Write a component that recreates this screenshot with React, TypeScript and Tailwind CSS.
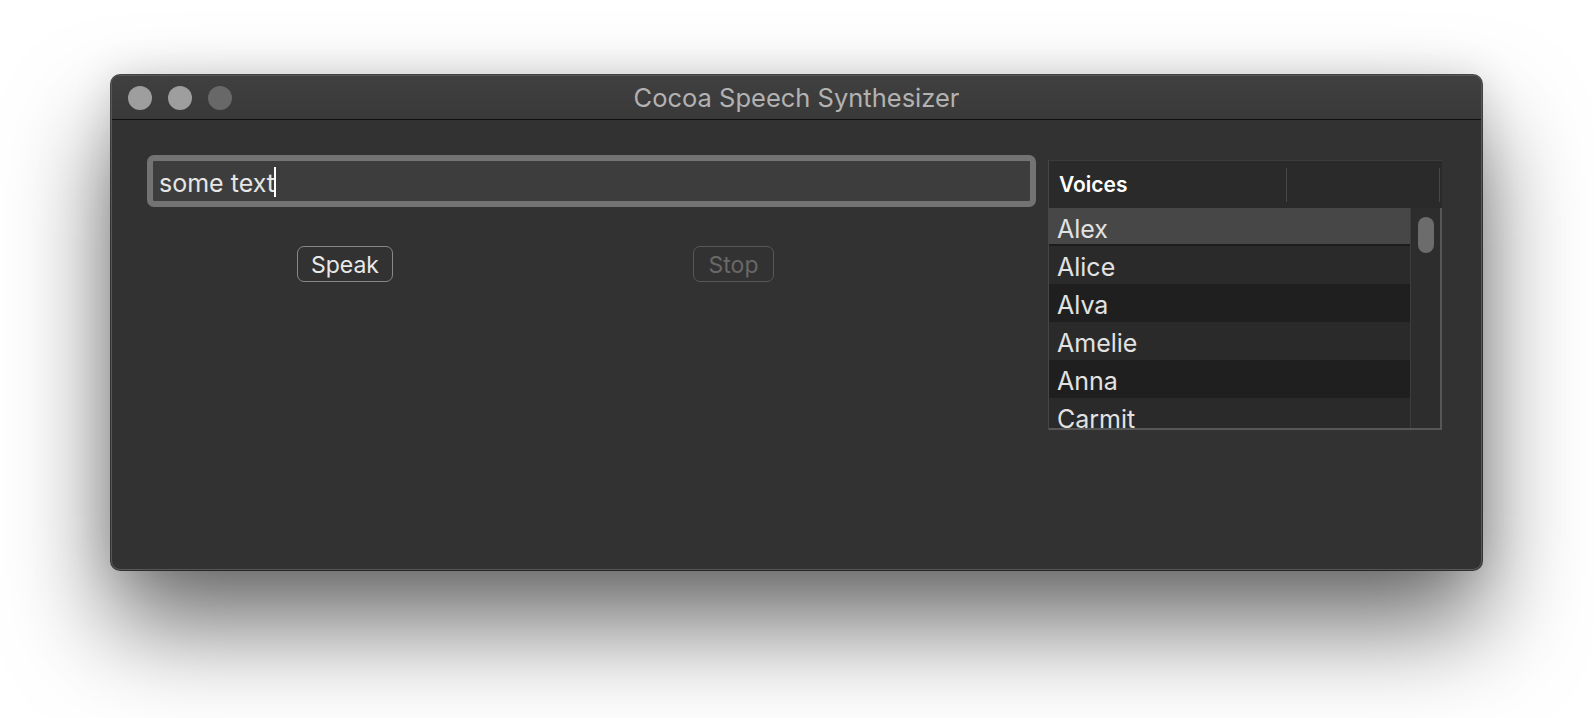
import React, { useState } from "react";

const voices = ["Alex", "Alice", "Alva", "Amelie", "Anna", "Carmit"];

const font = { fontFamily: "Inter, 'Noto Sans', 'Liberation Sans', sans-serif" };

const TrafficLights: React.FC = () => (
  <div className="flex items-center gap-[16px] pl-[16px]">
    <span className="w-[24px] h-[24px] rounded-full bg-[#9e9e9e]" />
    <span className="w-[24px] h-[24px] rounded-full bg-[#9e9e9e]" />
    <span className="w-[24px] h-[24px] rounded-full bg-[#686868]" />
  </div>
);

const VoicesTable: React.FC<{ selected: number; onSelect: (i: number) => void }> = ({ selected, onSelect }) => (
  <div className="mt-[5px] w-[394px] h-[270px] flex flex-col border-l border-[#464646]">
    {/* header */}
    <div className="h-[48px] shrink-0 flex items-center bg-[#2a2a2a] border-t border-[#3c3c3c]">
      <div className="w-[238px] h-[34px] flex items-center pl-[10px] pt-[1px] border-r border-[#474747] text-[21px] font-semibold text-white">
        Voices
      </div>
      <div className="flex-1 h-[34px] border-r border-[#474747]" />
      <div className="w-[2px]" />
    </div>

    {/* rows + scroller */}
    <div className="flex-1 flex min-h-0 border-r-2 border-b-2 border-[#575757]">
      <div className="flex-1 overflow-hidden">
        {voices.map((v, i) => {
          const isSel = i === selected;
          const stripe = i % 2 === 0 ? "bg-[#1f1f1f]" : "bg-[#2a2a2a]";
          return (
            <div
              key={v}
              onClick={() => onSelect(i)}
              className={`h-[38px] flex items-center pl-[8px] text-[25px] text-[#e2e2e2] cursor-default ${
                isSel ? "pt-[7px] bg-[#474747] border-b-2 border-[#1d1d1d]" : `pt-[5px] ${stripe}`
              }`}
            >
              {v}
            </div>
          );
        })}
      </div>
      <div className="w-[30px] shrink-0 bg-[#2d2d2d] border-l border-[#3c3c3c] pt-[9px] pl-[7px]">
        <div className="w-[16px] h-[36px] rounded-full bg-[#6c6c6c]" />
      </div>
    </div>
  </div>
);

const App: React.FC = () => {
  const [text] = useState("some text");
  const [selected, setSelected] = useState(0);

  return (
    <div className="min-h-screen bg-white pt-[75px] pl-[111px]" style={font}>
      <div className="w-[1371px] h-[495px] rounded-[9px] bg-[#323232] border border-[#575757] ring-1 ring-black/70 overflow-hidden flex flex-col shadow-[0_55px_100px_rgba(0,0,0,0.58),0_0_40px_rgba(0,0,0,0.12)]">
        {/* title bar */}
        <div className="h-[44px] shrink-0 grid grid-cols-[1fr_auto_1fr] items-center bg-gradient-to-b from-[#404040] to-[#393939] border-b border-[#101010]">
          <TrafficLights />
          <div className="text-[25.5px] text-[#b2b2b2] pt-[2px]">Cocoa Speech Synthesizer</div>
          <div />
        </div>

        {/* content */}
        <div className="flex-1 flex pt-[35px] pl-[35px] gap-[12px]">
          <div className="w-[889px] flex flex-col">
            <div className="h-[52px] rounded-[7px] border-[6px] border-[#737373] bg-[#3d3d3d] flex items-center pl-[6px]">
              <span className="text-[25px] text-[#e6e6e6] mt-[5px]">{text}</span>
              <span className="inline-block w-[2px] h-[30px] bg-white ml-[-1px] mt-[2px]" />
            </div>

            <div className="flex items-start mt-[39px] ml-[150px] gap-[300px]">
              <button className="w-[96px] h-[36px] rounded-[7px] border-[1.5px] border-[#888888] text-[23px] text-[#e8e8e8] flex items-center justify-center pt-[2px]">
                Speak
              </button>
              <button
                disabled
                className="w-[81px] h-[36px] rounded-[7px] border-[1.5px] border-[#585858] text-[23px] text-[#686868] flex items-center justify-center pt-[2px]"
              >
                Stop
              </button>
            </div>
          </div>

          <VoicesTable selected={selected} onSelect={setSelected} />
        </div>
      </div>
    </div>
  );
};

export default App;
